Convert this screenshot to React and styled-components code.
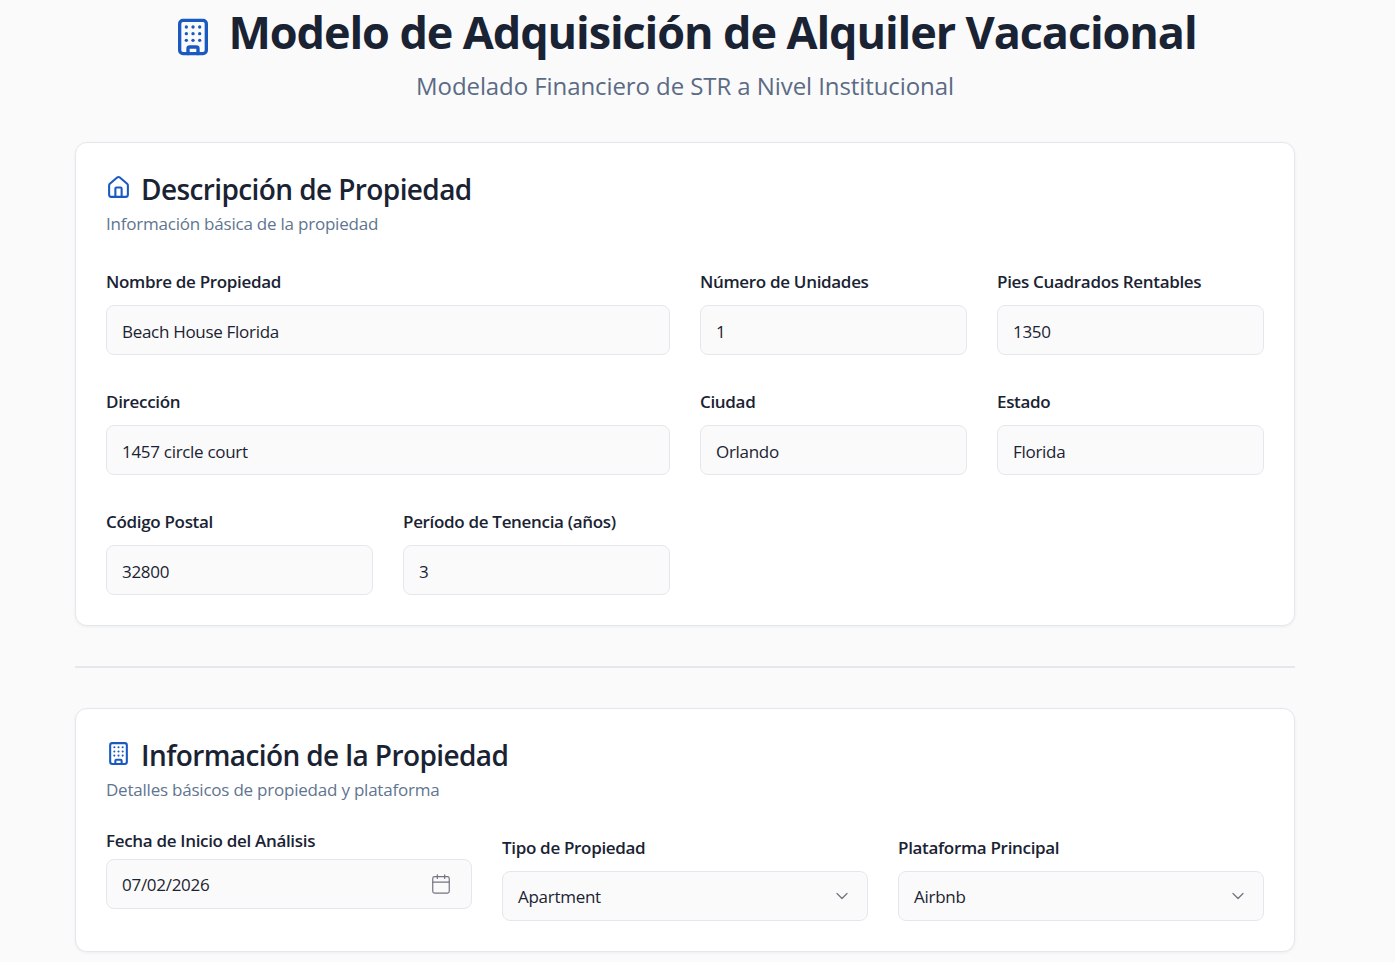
import React from "react";
import styled, { createGlobalStyle } from "styled-components";
import { Building, Calendar, ChevronDown, House } from "lucide-react";

const font = `"Open Sans", "Noto Sans", sans-serif`;

const GlobalStyle = createGlobalStyle`
  html, body {
    margin: 0;
    padding: 0;
    background: #fafafa;
    height: 962px;
    overflow: hidden;
  }
  * {
    box-sizing: border-box;
  }
`;

const Page = styled.div`
  font-family: ${font};
  color: #1a2333;
  width: 1220px;
  margin-left: 75px;
`;

const Header = styled.header`
  display: flex;
  flex-direction: column;
  align-items: center;
  padding-bottom: 40px;
`;

const TitleRow = styled.div`
  display: flex;
  align-items: center;
  gap: 15px;
  height: 64px;
  svg {
    color: #1a5ac0;
    margin-top: 9px;
  }
`;

const Title = styled.h1`
  font-size: 45px;
  line-height: 64px;
  font-weight: 700;
  letter-spacing: -1.1px;
  margin: 0;
`;

const Subtitle = styled.p`
  font-size: 24px;
  line-height: 32px;
  color: #5a6b85;
  margin: 6px 0 0;
  letter-spacing: -0.08px;
`;

const Card = styled.section`
  background: #fff;
  border: 1px solid #e3e8ef;
  border-radius: 12px;
  box-shadow: 0 1px 3px rgba(20, 30, 50, 0.06);
  padding: 30px;
`;

const CardHeading = styled.div`
  display: flex;
  align-items: center;
  gap: 10px;
  svg {
    color: #1a5ac0;
    margin-top: -4px;
  }
`;

const CardTitle = styled.h2`
  font-size: 28px;
  line-height: 32px;
  font-weight: 600;
  letter-spacing: -0.6px;
  margin: 0;
`;

const CardDescription = styled.p`
  font-size: 17px;
  line-height: 24px;
  color: #5f7590;
  letter-spacing: -0.22px;
  margin: 7px 0 0;
`;

const FormGrid = styled.div`
  display: grid;
  grid-template-columns: repeat(${(p) => p.$cols}, 1fr);
  gap: 30px;
  margin-top: 29px;
  align-items: start;
`;

const Field = styled.div`
  display: flex;
  flex-direction: column;
  gap: ${(p) => p.$gap}px;
  grid-column: span ${(p) => p.$span};
  margin-top: ${(p) => p.$offset}px;
`;

const Label = styled.label`
  font-size: 17px;
  line-height: 20px;
  font-weight: 600;
  letter-spacing: -0.32px;
`;

const Control = styled.div`
  display: flex;
  align-items: center;
  justify-content: space-between;
  height: 50px;
  padding: 0 15px;
  background: #fafafa;
  border: 1px solid #e3e8ef;
  border-radius: 8px;
  font-size: 17px;
  letter-spacing: -0.28px;
  svg {
    color: #757380;
    flex: none;
  }
`;

const ControlText = styled.span`
  padding-top: 1px;
`;

const CalendarIcon = styled(Calendar)`
  margin-right: 4px;
`;

const TextInput = styled.input`
  width: 100%;
  height: 50px;
  padding: 2px 15px 0;
  background: #fafafa;
  border: 1px solid #e3e8ef;
  border-radius: 8px;
  font-family: ${font};
  font-size: 17px;
  letter-spacing: -0.3px;
  color: #1a2333;
  outline: none;
`;

const Divider = styled.hr`
  height: 2px;
  border: 0;
  background: #e3e8ef;
  margin: 40px 0;
`;

const descriptionFields = [
  { label: "Nombre de Propiedad", value: "Beach House Florida", span: 2 },
  { label: "Número de Unidades", value: "1" },
  { label: "Pies Cuadrados Rentables", value: "1350" },
  { label: "Dirección", value: "1457 circle court", span: 2 },
  { label: "Ciudad", value: "Orlando" },
  { label: "Estado", value: "Florida" },
  { label: "Código Postal", value: "32800" },
  { label: "Período de Tenencia (años)", value: "3" },
];

function App() {
  return (
    <Page>
      <GlobalStyle />
      <Header>
        <TitleRow>
          <Building size={40} strokeWidth={2} />
          <Title>Modelo de Adquisición de Alquiler Vacacional</Title>
        </TitleRow>
        <Subtitle>Modelado Financiero de STR a Nivel Institucional</Subtitle>
      </Header>

      <Card>
        <CardHeading>
          <House size={25} />
          <CardTitle>Descripción de Propiedad</CardTitle>
        </CardHeading>
        <CardDescription>Información básica de la propiedad</CardDescription>
        <FormGrid $cols={4}>
          {descriptionFields.map((f) => (
            <Field key={f.label} $span={f.span || 1} $gap={13} $offset={7}>
              <Label>{f.label}</Label>
              <TextInput defaultValue={f.value} />
            </Field>
          ))}
        </FormGrid>
      </Card>

      <Divider />

      <Card>
        <CardHeading>
          <Building size={25} />
          <CardTitle>Información de la Propiedad</CardTitle>
        </CardHeading>
        <CardDescription>Detalles básicos de propiedad y plataforma</CardDescription>
        <FormGrid $cols={3}>
          <Field $span={1} $gap={8} $offset={0}>
            <Label>Fecha de Inicio del Análisis</Label>
            <Control>
              <ControlText>07/02/2026</ControlText>
              <CalendarIcon size={22} strokeWidth={1.3} />
            </Control>
          </Field>
          <Field $span={1} $gap={13} $offset={7}>
            <Label>Tipo de Propiedad</Label>
            <Control>
              <ControlText>Apartment</ControlText>
              <ChevronDown size={20} strokeWidth={1.5} />
            </Control>
          </Field>
          <Field $span={1} $gap={13} $offset={7}>
            <Label>Plataforma Principal</Label>
            <Control>
              <ControlText>Airbnb</ControlText>
              <ChevronDown size={20} strokeWidth={1.5} />
            </Control>
          </Field>
        </FormGrid>
      </Card>
    </Page>
  );
}

export default App;
